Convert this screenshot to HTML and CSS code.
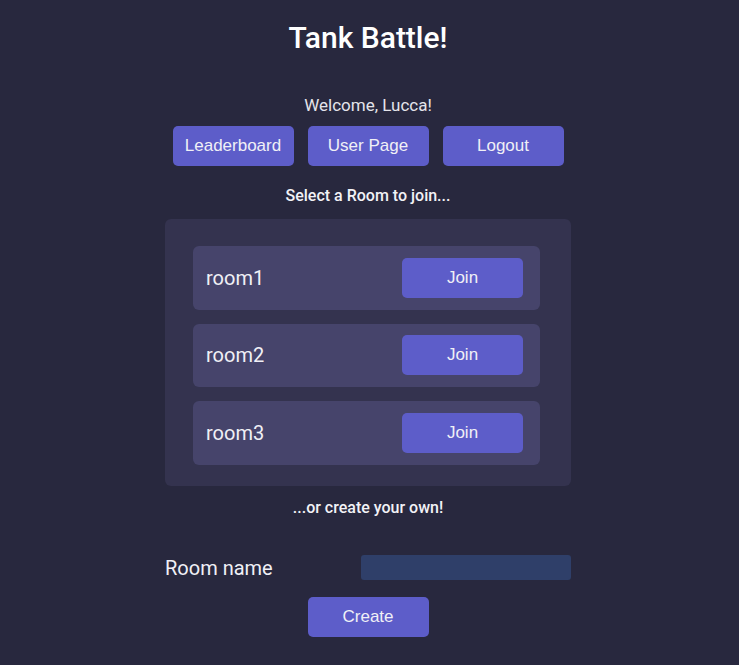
FILE: index.html
```html
<!DOCTYPE html>
<html>
<head>
<meta charset="utf-8">
<link rel="stylesheet" href="styles.css">
</head>
<body>
<main class="page">
  <h1 class="title">Tank Battle!</h1>
  <p class="welcome">Welcome, Lucca!</p>
  <nav class="nav">
    <button class="btn">Leaderboard</button>
    <button class="btn">User Page</button>
    <button class="btn">Logout</button>
  </nav>
  <p class="section-label">Select a Room to join...</p>
  <section class="rooms">
    <div class="room"><span class="room-name">room1</span><button class="btn">Join</button></div>
    <div class="room"><span class="room-name">room2</span><button class="btn">Join</button></div>
    <div class="room"><span class="room-name">room3</span><button class="btn">Join</button></div>
  </section>
  <p class="section-label create-label">...or create your own!</p>
  <form class="create">
    <div class="field">
      <label class="field-label">Room name</label>
      <input class="field-input" type="text">
    </div>
    <button class="btn" type="button">Create</button>
  </form>
</main>
</body>
</html>
```
FILE: styles.css
```css
html, body {
  margin: 0;
  padding: 0;
  background: #28283e;
  height: 100%;
}
body {
  font-family: Roboto, "Liberation Sans", sans-serif;
  color: #eeeef2;
  padding-right: 3px;
  box-sizing: border-box;
}
.page {
  width: 406px;
  margin: 0 auto;
  display: flex;
  flex-direction: column;
  align-items: center;
}
.title {
  margin: 20px 0 0;
  font-size: 30px;
  line-height: 36px;
  font-weight: 500;
  color: #ffffff;
}
.welcome {
  margin: 38px 0 0;
  font-size: 17px;
  line-height: 22px;
  color: #e4e4ea;
}
.nav {
  display: flex;
  gap: 14px;
  margin-top: 10px;
}
.btn {
  width: 121px;
  height: 40px;
  border: none;
  border-radius: 5px;
  background: #5d5dc9;
  color: #f0f0f6;
  font-family: "Liberation Sans", Arial, sans-serif;
  font-size: 17px;
  padding: 0;
}
.section-label {
  margin: 20px 0 0;
  font-size: 16px;
  line-height: 20px;
  font-weight: 500;
  color: #f2f2f6;
}
.rooms {
  align-self: stretch;
  margin-top: 13px;
  background: #34334f;
  border-radius: 6px;
  padding: 27px 31px 21.5px 28px;
  display: flex;
  flex-direction: column;
  gap: 14px;
}
.room {
  height: 63.5px;
  background: #46446b;
  border-radius: 6px;
  display: flex;
  align-items: center;
  justify-content: space-between;
  padding: 0 17px 0 13px;
}
.room-name {
  font-size: 20px;
  color: #f0f0f6;
}
.create-label {
  margin-top: 12px;
}
.create {
  align-self: stretch;
  margin-top: 36px;
  display: flex;
  flex-direction: column;
  align-items: center;
  gap: 16px;
}
.field {
  align-self: stretch;
  display: flex;
  align-items: center;
  justify-content: space-between;
  height: 27px;
}
.field-label {
  font-size: 20px;
  color: #f0f0f6;
}
.field-input {
  width: 210px;
  height: 25px;
  box-sizing: border-box;
  border: none;
  border-radius: 3px;
  background: #2f3f69;
  padding: 0 6px;
}
```
